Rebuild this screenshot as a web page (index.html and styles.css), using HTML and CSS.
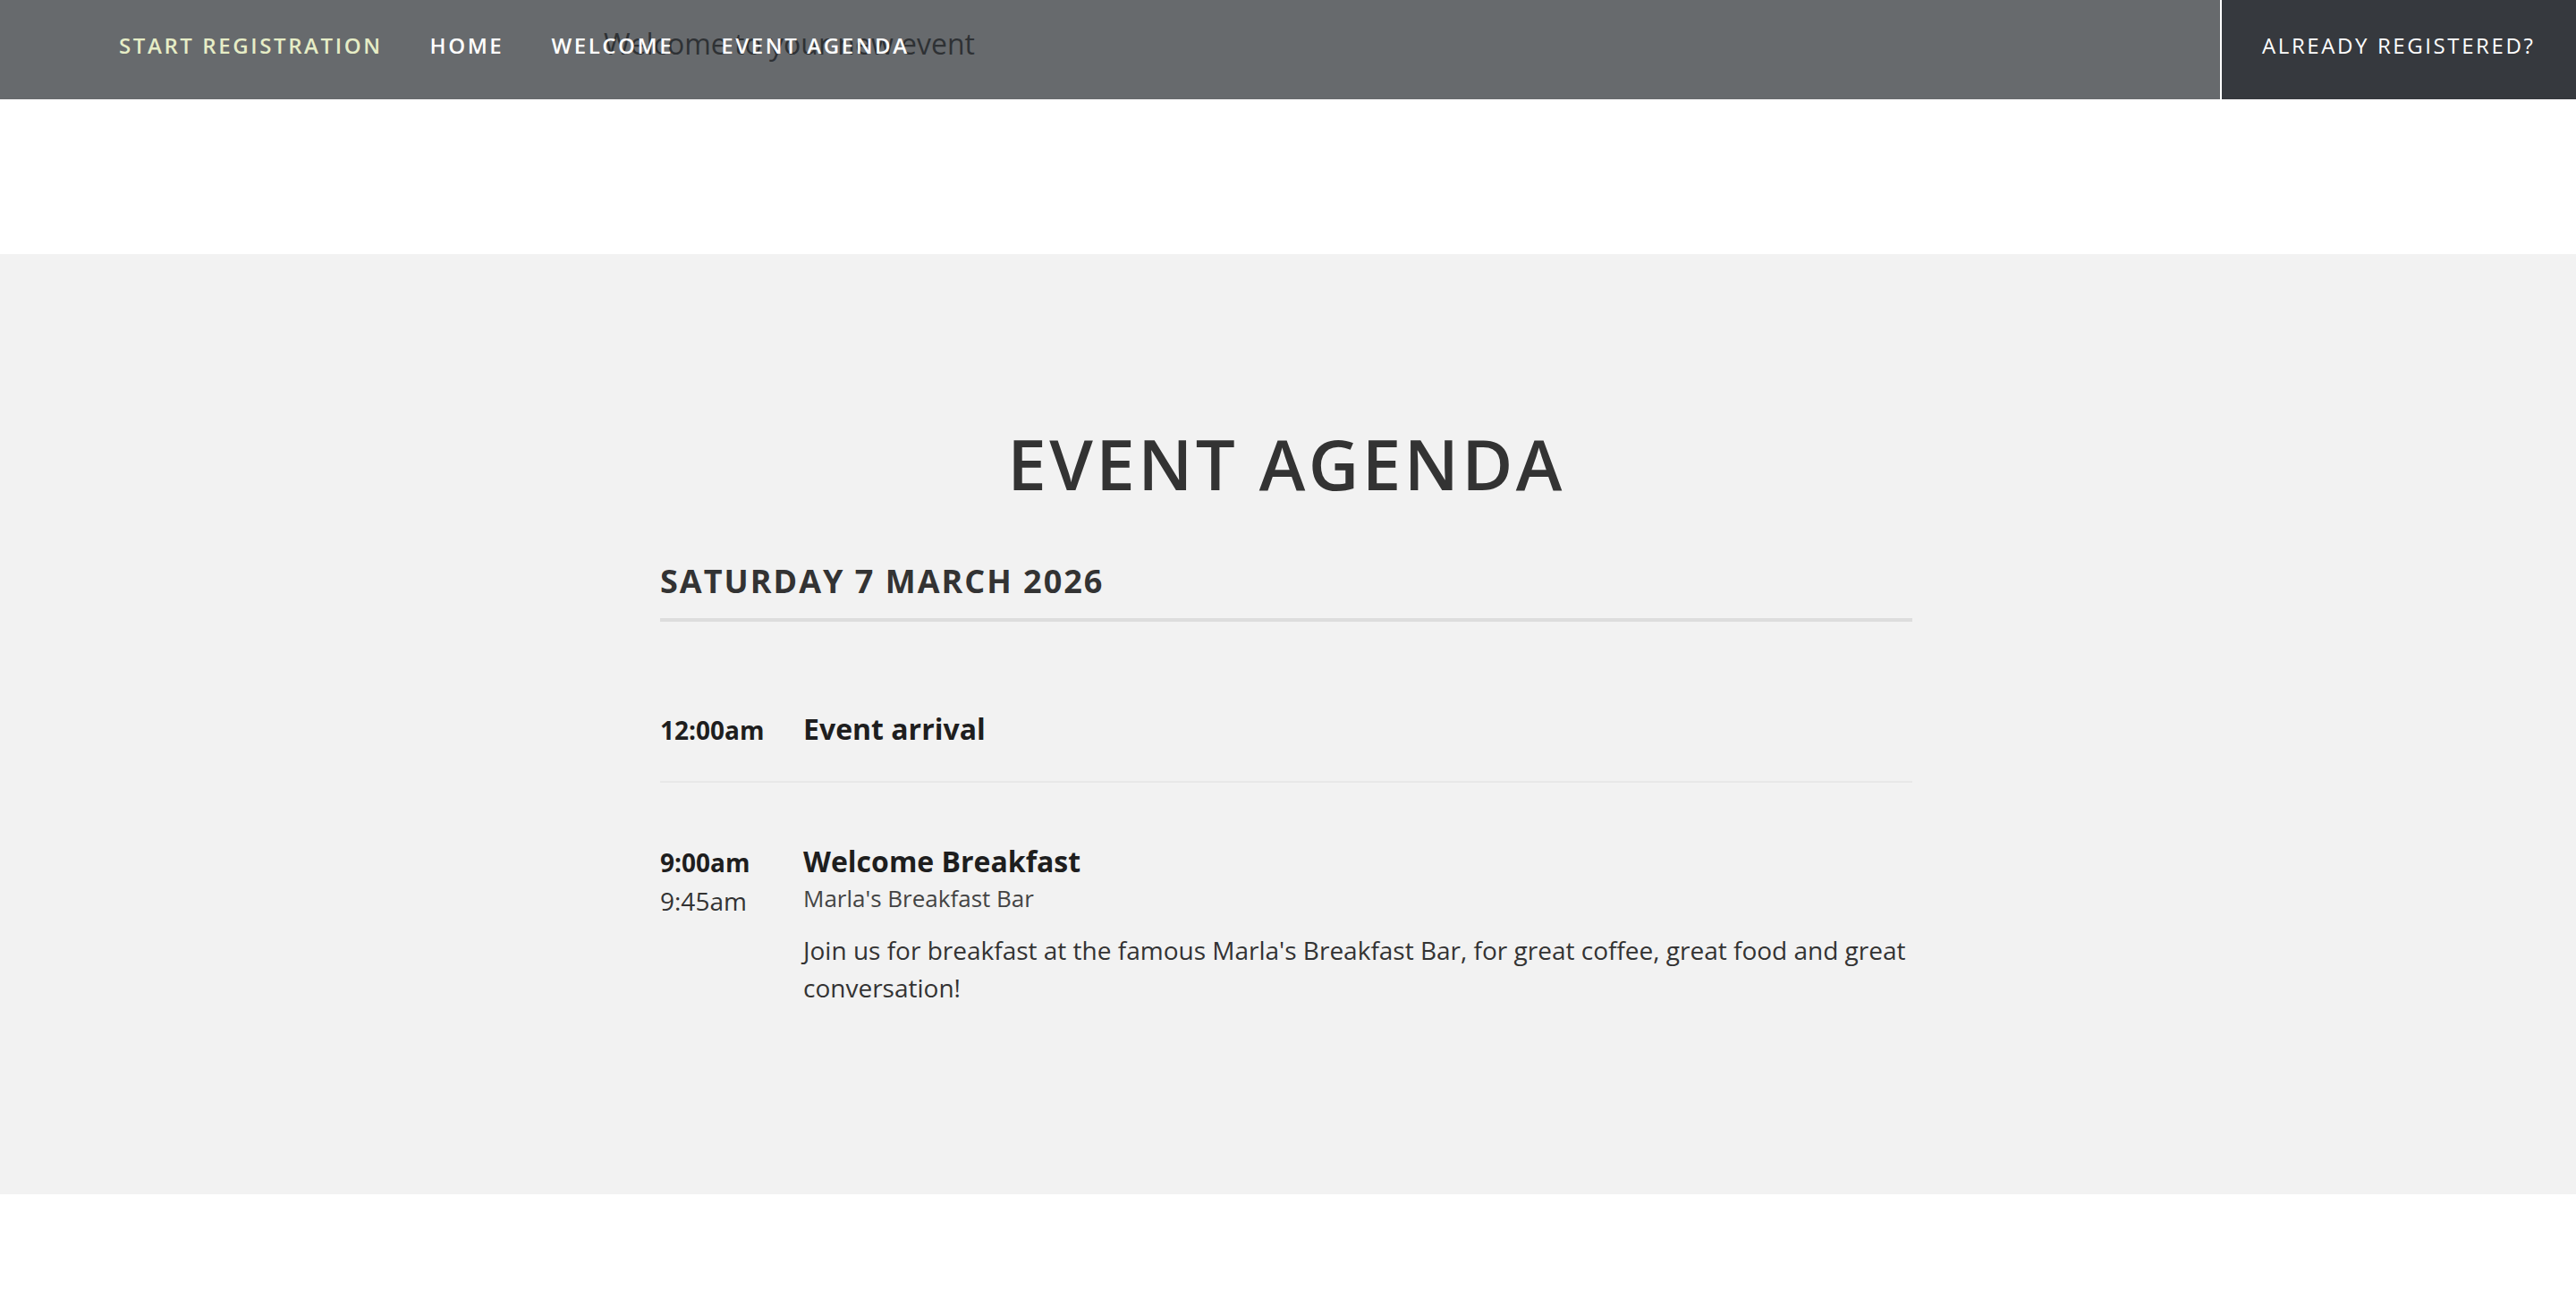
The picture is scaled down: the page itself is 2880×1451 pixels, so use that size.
FILE: index.html
```html
<!DOCTYPE html>
<html lang="en">
<head>
<meta charset="utf-8">
<title>Event Agenda</title>
<link rel="stylesheet" href="styles.css">
</head>
<body>
<header class="hero">
  <h1 class="hero-title">Welcome to your new event</h1>
</header>
<nav class="topnav">
  <ul class="nav-links">
    <li><a class="nav-link nav-link-accent" href="#">Start Registration</a></li>
    <li><a class="nav-link" href="#">Home</a></li>
    <li><a class="nav-link" href="#">Welcome</a></li>
    <li><a class="nav-link" href="#">Event Agenda</a></li>
  </ul>
  <a class="nav-login" href="#">Already Registered?</a>
</nav>
<main class="agenda">
  <div class="agenda-inner">
    <h2 class="agenda-title">Event Agenda</h2>
    <h3 class="agenda-day">Saturday 7 March 2026</h3>
    <div class="agenda-item">
      <div class="item-time">
        <span class="time-start">12:00am</span>
      </div>
      <div class="item-body">
        <h4 class="item-title">Event arrival</h4>
      </div>
    </div>
    <div class="agenda-item agenda-item-last">
      <div class="item-time">
        <span class="time-start">9:00am</span>
        <span class="time-end">9:45am</span>
      </div>
      <div class="item-body">
        <h4 class="item-title">Welcome Breakfast</h4>
        <p class="item-location">Marla's Breakfast Bar</p>
        <p class="item-desc">Join us for breakfast at the famous Marla's Breakfast Bar, for great coffee, great food and great conversation!</p>
      </div>
    </div>
  </div>
</main>
<footer class="page-foot"></footer>
</body>
</html>
```
FILE: styles.css
```css
* { box-sizing: border-box; }
html, body { margin: 0; padding: 0; }
body {
  font-family: "Open Sans", "Noto Sans", sans-serif;
  color: #333;
  background: #fff;
  position: relative;
}
h1, h2, h3, h4, p, ul { margin: 0; padding: 0; }
a { text-decoration: none; }

.hero {
  height: 284px;
  padding: 30px 0 0 675px;
  background: #fff;
}
.hero-title {
  font-size: 32px;
  line-height: 1.2;
  font-weight: 400;
  color: #333;
}

.topnav {
  position: absolute;
  top: 0;
  left: 0;
  right: 0;
  height: 111px;
  display: flex;
  align-items: stretch;
  justify-content: space-between;
  background: rgba(44, 48, 52, 0.72);
}
.nav-links {
  list-style: none;
  display: flex;
  align-items: center;
  gap: 53px;
  padding: 0 0 10px 133px;
}
.nav-link {
  font-size: 24px;
  font-weight: 600;
  letter-spacing: 2.6px;
  text-transform: uppercase;
  color: #fff;
}
.nav-link-accent { color: #e6edc6; }
.nav-login {
  display: flex;
  align-items: center;
  width: 398px;
  padding: 0 0 10px 45px;
  border-left: 2px solid #fff;
  background: #36393e;
  color: #fff;
  font-size: 24px;
  font-weight: 500;
  letter-spacing: 2.6px;
  text-transform: uppercase;
}

.agenda {
  background: #f2f2f2;
  padding: 188px 0 210px;
}
.agenda-inner {
  width: 1400px;
  margin: 0 0 0 738px;
}
.agenda-title {
  font-size: 78px;
  line-height: 1.2;
  font-weight: 600;
  letter-spacing: 3.4px;
  text-transform: uppercase;
  text-align: center;
  color: #333;
  margin-bottom: 62px;
}
.agenda-day {
  font-size: 36px;
  line-height: 1.2;
  font-weight: 700;
  letter-spacing: 2px;
  text-transform: uppercase;
  color: #333;
  padding-bottom: 20px;
  border-bottom: 4px solid #dddddd;
  margin-bottom: 32px;
}
.agenda-item {
  display: grid;
  grid-template-columns: 160px 1fr;
  align-items: baseline;
  padding: 68px 0 35px;
  border-bottom: 2px solid #e8e8e8;
}
.agenda-item-last { border-bottom: none; padding-bottom: 0; padding-top: 68px; }
.item-time {
  display: flex;
  flex-direction: column;
  font-size: 28px;
  line-height: 43px;
  color: #1e1e1e;
}
.time-start { font-weight: 700; }
.time-end { font-weight: 400; color: #333; }
.item-title {
  font-size: 32px;
  line-height: 40px;
  font-weight: 700;
  color: #1e1e1e;
}
.item-location {
  font-size: 26px;
  line-height: 37px;
  margin-top: 3px;
  color: #444;
}
.item-desc {
  font-size: 28px;
  line-height: 42px;
  margin-top: 18px;
  color: #333;
}
.page-foot {
  height: 119px;
  background: #fff;
}
```
